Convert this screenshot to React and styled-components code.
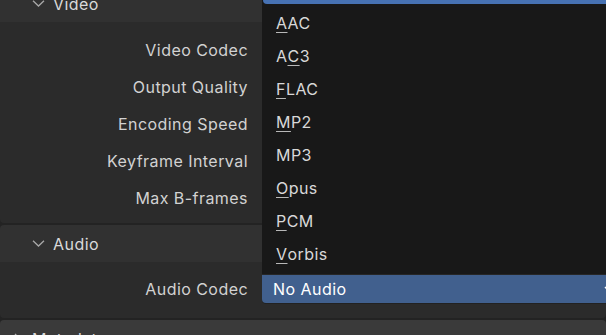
import React from 'react';
import styled, { createGlobalStyle } from 'styled-components';

const GlobalStyle = createGlobalStyle`
  body {
    margin: 0;
    background: #1d1d1d;
    font-family: Inter, "Noto Sans", sans-serif;
    letter-spacing: 0.45px;
  }
`;

const Screen = styled.div`
  width: 606px;
  height: 335px;
  overflow: hidden;
  position: relative;
  background: #232323;
`;

const Stack = styled.div`
  display: flex;
  flex-direction: column;
  gap: 2px;
  margin-top: -15px;
`;

const Panel = styled.section`
  display: flex;
  flex-direction: column;
  border-radius: 4px;
  overflow: hidden;
`;

const Header = styled.div`
  height: 37px;
  flex-shrink: 0;
  display: flex;
  align-items: center;
  gap: ${p => (p.$top ? 11 : 8)}px;
  padding-left: ${p => (p.$top ? 14 : 32)}px;
  background: ${p => (p.$top ? '#3a3a3a' : '#313131')};
  color: #dadada;
  font-size: 16px;
`;

const Body = styled.div`
  display: flex;
  flex-direction: column;
  background: #2b2b2b;
  padding: ${p => p.$pad};
`;

const Row = styled.div`
  height: 37px;
  display: grid;
  grid-template-columns: 248px 1fr;
  column-gap: 14px;
  align-items: center;
`;

const Label = styled.div`
  text-align: right;
  color: #d2d2d2;
  font-size: 16px;
  white-space: nowrap;
`;

const Field = styled.div`
  position: relative;
  height: 28px;
  margin-right: -60px;
  display: flex;
  align-items: center;
  padding-left: 11px;
  background: #41608e;
  border-radius: 0 0 4px 4px;
  box-shadow: 0 1px 0 #222, 0 -1px 0 #262626;
  color: #ffffff;
  font-size: 16px;
`;

const FieldArrow = styled.svg`
  position: absolute;
  left: 342px;
  top: 9px;
`;

const Menu = styled.div`
  position: absolute;
  left: 262px;
  top: 0;
  width: 380px;
  height: 274px;
  background: #181818;
  display: flex;
  flex-direction: column;
`;

const MenuTop = styled.div`
  height: 4px;
  margin-left: 1px;
  background: #4772b3;
  border-radius: 0 0 0 4px;
  margin-bottom: 2.5px;
`;

const Item = styled.div`
  height: 33px;
  flex-shrink: 0;
  display: flex;
  align-items: center;
  padding-left: 14px;
  color: #d8d8d8;
  font-size: 16px;
`;

const Key = styled.span`
  text-decoration: underline;
  text-decoration-thickness: 1px;
  text-underline-offset: 3px;
  text-decoration-color: #b8b8b8;
`;

function Chevron({ right }) {
  return right ? (
    <svg width="7" height="12" viewBox="0 0 7 12">
      <polyline points="1,1 6,6 1,11" fill="none" stroke="#b0b0b0" strokeWidth="1.3" />
    </svg>
  ) : (
    <svg width="13" height="7" viewBox="0 0 13 7">
      <polyline points="1,0.8 6.5,6 12,0.8" fill="none" stroke="#a8a8a8" strokeWidth="1.3" />
    </svg>
  );
}

const videoRows = ['Video Codec', 'Output Quality', 'Encoding Speed', 'Keyframe Interval', 'Max B-frames'];

const codecs = [
  ['', 'A', 'AC'],
  ['A', 'C', '3'],
  ['', 'F', 'LAC'],
  ['', 'M', 'P2'],
  ['MP3', '', ''],
  ['', 'O', 'pus'],
  ['', 'P', 'CM'],
  ['', 'V', 'orbis'],
];

export default function App() {
  return (
    <Screen>
      <GlobalStyle />
      <Stack>
        <Panel>
          <Header>
            <Chevron />
            Video
          </Header>
          <Body $pad="9.5px 0 6.5px">
            {videoRows.map(label => (
              <Row key={label}>
                <Label>{label}</Label>
              </Row>
            ))}
          </Body>
        </Panel>

        <Panel>
          <Header>
            <Chevron />
            Audio
          </Header>
          <Body $pad="8.5px 0 10.5px">
            <Row>
              <Label>Audio Codec</Label>
              <Field>
                No Audio
                <FieldArrow width="10" height="10" viewBox="0 0 10 10">
                  <polyline points="1,3 5,7 9,3" fill="none" stroke="#ffffff" strokeWidth="1.4" />
                </FieldArrow>
              </Field>
            </Row>
          </Body>
        </Panel>

        <Panel>
          <Header $top>
            <Chevron right />
            Metadata
          </Header>
        </Panel>
      </Stack>

      <Menu>
        <MenuTop />
        {codecs.map(([pre, key, post], i) => (
          <Item key={i}>
            {pre}
            {key && <Key>{key}</Key>}
            {post}
          </Item>
        ))}
      </Menu>
    </Screen>
  );
}
